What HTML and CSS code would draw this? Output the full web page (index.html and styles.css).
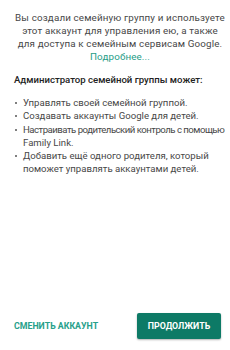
FILE: index.html
```html
<!DOCTYPE html>
<html lang="ru">
<head>
<meta charset="utf-8">
<link rel="stylesheet" href="styles.css">
</head>
<body>
<div class="page">
  <div class="intro">
    <p class="lead">Вы создали семейную группу и используете<br>этот аккаунт для управления ею, а также<br>для доступа к семейным сервисам Google.</p>
    <a class="more">Подробнее...</a>
  </div>
  <div class="section">
    <h2 class="title">Администратор семейной группы может:</h2>
    <ul class="list">
      <li>Управлять своей семейной группой.</li>
      <li>Создавать аккаунты Google для детей.</li>
      <li><span class="tight">Настраивать родительский контроль с помощью</span><br>Family Link.</li>
      <li>Добавить ещё одного родителя, который<br>поможет управлять аккаунтами детей.</li>
    </ul>
  </div>
  <div class="actions">
    <button class="btn-text">СМЕНИТЬ АККАУНТ</button>
    <button class="btn-primary">ПРОДОЛЖИТЬ</button>
  </div>
</div>
</body>
</html>
```

FILE: styles.css
```css
html, body {
  margin: 0;
  padding: 0;
  background: #ffffff;
}
body {
  font-family: Roboto, "Noto Sans", sans-serif;
  color: #474747;
  font-size: 9.8px;
  letter-spacing: 0.15px;
  width: 230px;
  height: 350px;
  overflow: hidden;
}
.page {
  display: flex;
  flex-direction: column;
  height: 350px;
}
.intro {
  padding: 11px 0 0 10px;
  text-align: center;
  line-height: 13px;
  white-space: nowrap;
}
.lead {
  margin: 0;
}
.more {
  display: block;
  color: #1f9d87;
}
.section {
  padding: 10px 0 0 14px;
  white-space: nowrap;
}
.title {
  margin: 0;
  font-size: 9.6px;
  font-weight: 500;
  letter-spacing: 0;
  color: #222222;
  line-height: 13px;
}
.list {
  list-style: none;
  margin: 10px 0 0;
  padding: 0;
  font-size: 9.6px;
  letter-spacing: 0;
}
.list li {
  position: relative;
  padding-left: 9px;
  line-height: 13.3px;
}
.tight {
  letter-spacing: -0.5px;
}
.list li::before {
  content: "";
  position: absolute;
  left: 1px;
  top: 6px;
  width: 2px;
  height: 2px;
  border-radius: 50%;
  background: #555555;
}
.actions {
  margin-top: auto;
  display: flex;
  justify-content: space-between;
  align-items: center;
  padding: 0 9px 11px 14px;
}
.btn-text {
  border: none;
  background: none;
  padding: 0;
  font-family: Roboto, sans-serif;
  font-weight: 700;
  font-size: 8.8px;
  color: #26a08a;
}
.btn-primary {
  border: none;
  background: #0d7a66;
  color: #ffffff;
  font-family: Roboto, sans-serif;
  font-weight: 700;
  font-size: 8.8px;
  height: 26px;
  width: 84px;
  border-radius: 2px;
  box-shadow: 0 1px 2px rgba(0,0,0,0.3);
}
```
